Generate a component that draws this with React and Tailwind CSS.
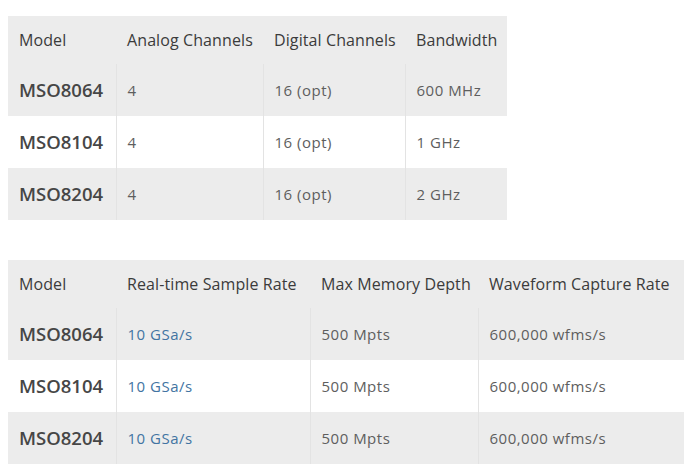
const specs = [
  {
    cols: ["Model", "Analog Channels", "Digital Channels", "Bandwidth"],
    tableW: "w-[499px]",
    widths: ["w-[108px]", "w-[147px]", "w-[142px]", "w-[102px]"],
    rows: [
      ["MSO8064", "4", "16 (opt)", "600 MHz"],
      ["MSO8104", "4", "16 (opt)", "1 GHz"],
      ["MSO8204", "4", "16 (opt)", "2 GHz"],
    ],
    blue: false,
  },
  {
    cols: ["Model", "Real-time Sample Rate", "Max Memory Depth", "Waveform Capture Rate"],
    tableW: "w-[676px]",
    widths: ["w-[108px]", "w-[194px]", "w-[168px]", "w-[206px]"],
    rows: [
      ["MSO8064", "10 GSa/s", "500 Mpts", "600,000 wfms/s"],
      ["MSO8104", "10 GSa/s", "500 Mpts", "600,000 wfms/s"],
      ["MSO8204", "10 GSa/s", "500 Mpts", "600,000 wfms/s"],
    ],
    blue: true,
  },
];

function SpecTable({ spec }) {
  return (
    <table className={`${spec.tableW} border-collapse table-fixed`}>
      <thead>
        <tr className="bg-[#ececec] h-[48px]">
          {spec.cols.map((c, i) => (
            <th
              key={c}
              className={`${spec.widths[i]} px-[11px] text-left font-normal text-[16px] tracking-[0.1px] text-[#3b3b3b] whitespace-nowrap`}
            >
              {c}
            </th>
          ))}
        </tr>
      </thead>
      <tbody>
        {spec.rows.map((r, ri) => (
          <tr key={r[0]} className={`h-[52px] ${ri === 1 ? "bg-white" : "bg-[#ececec]"}`}>
            {r.map((v, ci) => (
              <td
                key={ci}
                className={`px-[11px] whitespace-nowrap ${ci > 0 ? "border-l border-[#e3e3e3]" : ""} ${
                  ci === 0
                    ? "text-[18.5px] font-semibold text-[#464646]"
                    : ci === 1 && spec.blue
                    ? "text-[15px] tracking-[0.5px] text-[#4274a2]"
                    : "text-[15px] tracking-[0.5px] text-[#5e5e5e]"
                }`}
              >
                {v}
              </td>
            ))}
          </tr>
        ))}
      </tbody>
    </table>
  );
}

export default function App() {
  return (
    <div className="w-[698px] h-[476px] bg-white pt-[16px] pl-[8px] flex flex-col gap-[40px] font-['Open_Sans',sans-serif]">
      {specs.map((s, i) => (
        <SpecTable key={i} spec={s} />
      ))}
    </div>
  );
}
